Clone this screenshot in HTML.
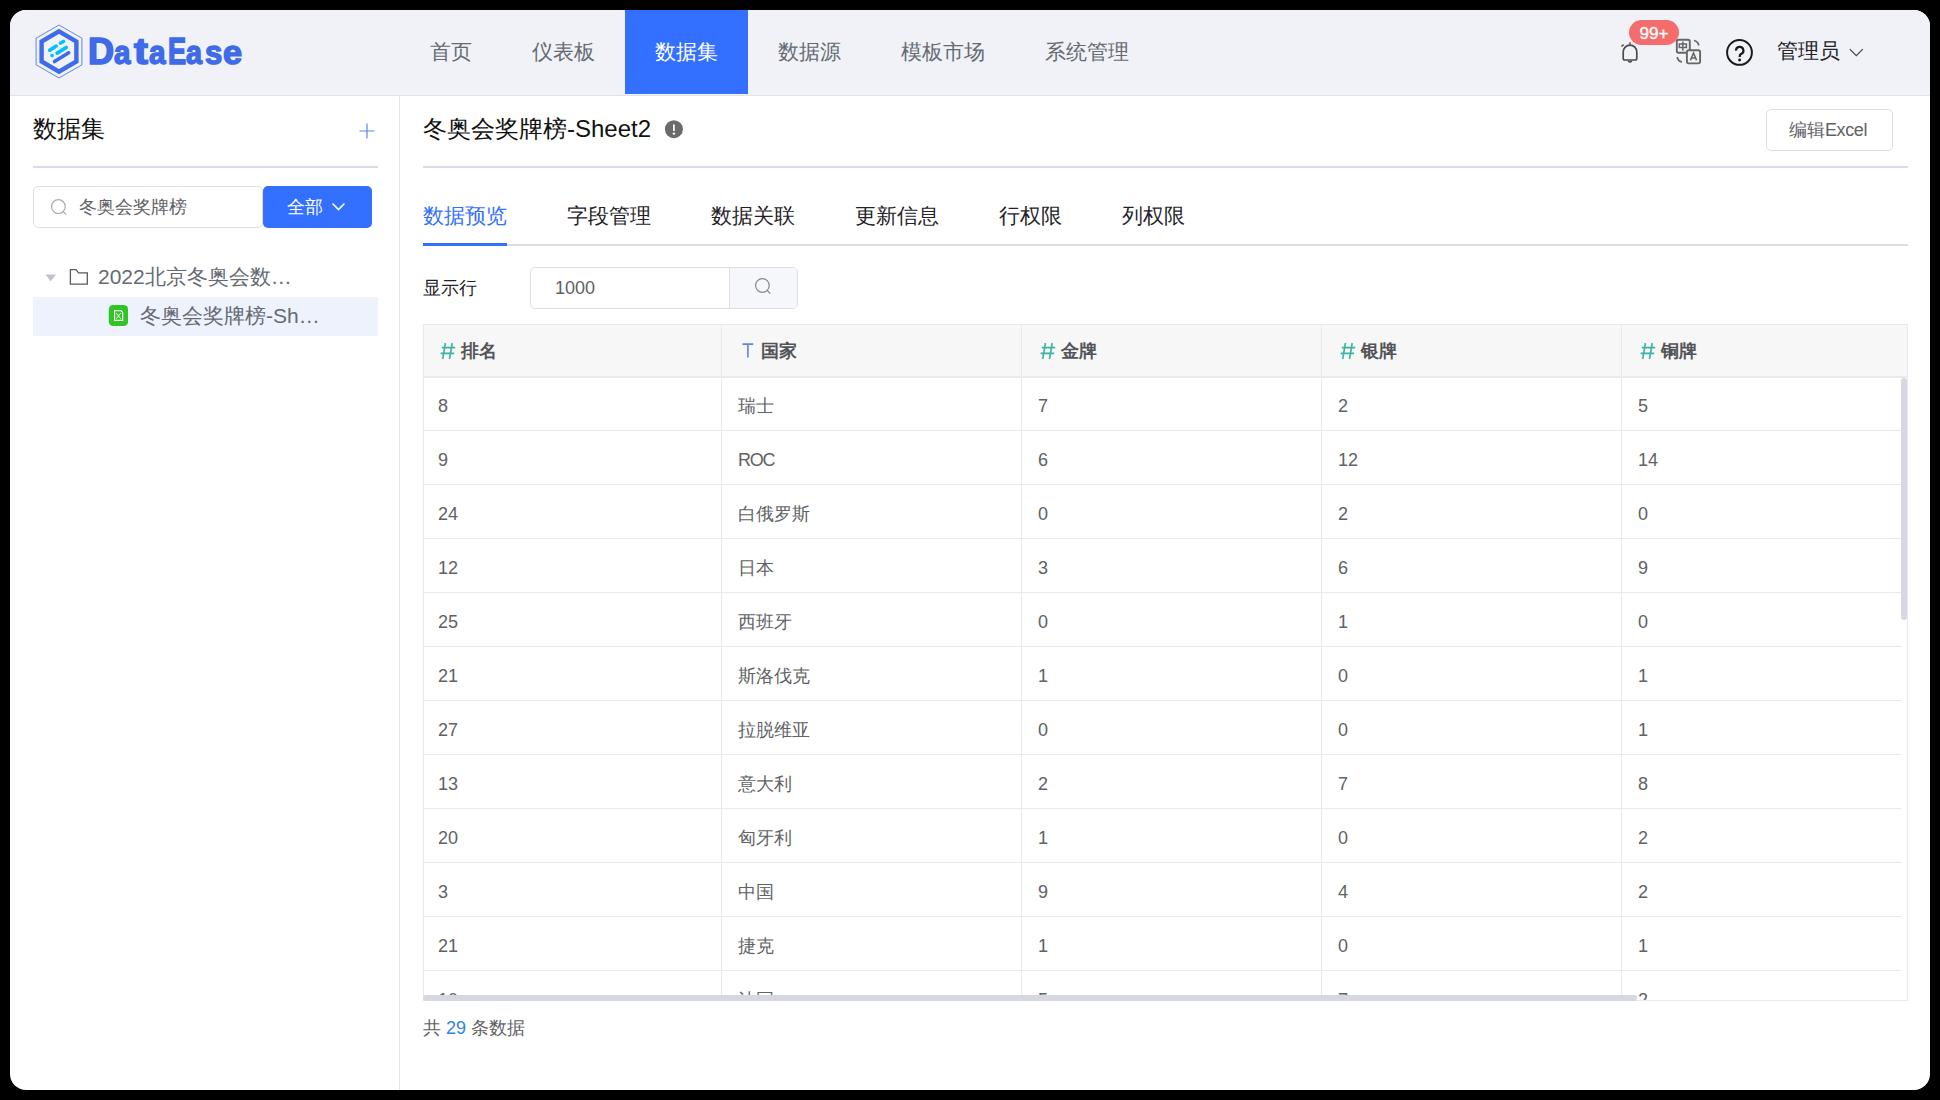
<!DOCTYPE html>
<html><head><meta charset="utf-8">
<style>
*{box-sizing:border-box;margin:0;padding:0}
html,body{width:1940px;height:1100px;background:#000;overflow:hidden;font-family:"Liberation Sans",sans-serif}
.win{position:absolute;left:10px;top:10px;width:1920px;height:1080px;border-radius:16px;background:#fff;overflow:hidden}
.a{position:absolute;white-space:nowrap}
.hdr{position:absolute;left:0;top:0;width:1920px;height:86px;background:#f1f2f7;border-bottom:1px solid #e2e3e6}
.nav{position:absolute;top:0;height:84px;line-height:84px;font-size:21px;color:#646a73;text-align:center}
.nav.on{background:#3370ff;color:#fff}
.side{position:absolute;left:0;top:86px;width:390px;height:994px;border-right:1px solid #e6e6e6}
.t18{font-size:18px;line-height:18px}
.t21{font-size:21px;line-height:21px}
.t24{font-size:24px;line-height:24px}
.tabs{position:absolute;left:413px;top:172px;width:1485px;height:64px;border-bottom:2px solid #dcdcdc}
.tab{position:absolute;top:23px;font-size:21px;line-height:21px;color:#1f2329}
.tbl{position:absolute;left:413px;top:314px;width:1485px;height:677px;border:1px solid #e8e9ec;overflow:hidden}
.th{position:absolute;top:0;height:53px;background:#f7f7f7;border-bottom:2px solid #e8eaed}
.col{position:absolute;top:0;width:1px;background:#e8e9ec}
.row{position:absolute;left:0;height:1px;background:#e8e9ec}
.cell{position:absolute;font-size:18px;line-height:18px;color:#606266}
.hd{position:absolute;top:17px;font-size:17.5px;line-height:18px;font-weight:bold;color:#525457}
.hd i{font-style:normal;font-weight:normal;color:#36b3a4;margin-right:6px}
.hd i.T{color:#3370ff}
</style></head><body>
<div class="win">
  <!-- header -->
  <div class="hdr">
    <svg class="a" style="left:0;top:0" width="80" height="80" viewBox="0 0 80 80">
      <polygon points="49,15 71.9,28.2 71.9,54.8 49,68 26.1,54.8 26.1,28.2" fill="none" stroke="#3f6ae8" stroke-width="0.8"/>
      <polygon points="49,21.4 66.4,31.5 66.4,51.5 49,61.6 31.6,51.5 31.6,31.5" fill="none" stroke="#3f6ae8" stroke-width="4.4"/>
      <g stroke-linecap="round" stroke-width="3.6" fill="none">
        <line x1="39.7" y1="40.2" x2="46.2" y2="36.1" stroke="#00bfff"/>
        <line x1="50.5" y1="33" x2="53.5" y2="31.5" stroke="#00bfff"/>
        <line x1="47.2" y1="43.1" x2="56.2" y2="37.5" stroke="#00bfff"/>
        <line x1="42" y1="45.6" x2="42.1" y2="45.6" stroke="#00bfff"/>
        <line x1="44.5" y1="51.5" x2="58.7" y2="42.8" stroke="#3f6ae8"/>
      </g>
    </svg>
    <div class="a" style="left:0;top:23px;width:260px;height:40px;font-size:37px;line-height:37px;font-weight:bold;color:#3f6ae8;-webkit-text-stroke:1.6px #3f6ae8"><span class="a" style="left:78.05px;top:0;transform:scaleX(0.975);transform-origin:0 0">D</span><span class="a" style="left:104.34px;top:0;transform:scale(0.799,0.9);transform-origin:0 32px">a</span><span class="a" style="left:124.00px;top:0;transform:scaleX(1.130);transform-origin:0 0">t</span><span class="a" style="left:139.34px;top:0;transform:scale(0.804,0.9);transform-origin:0 32px">a</span><span class="a" style="left:157.51px;top:0;transform:scaleX(0.734);transform-origin:0 0">E</span><span class="a" style="left:176.26px;top:0;transform:scale(0.775,0.9);transform-origin:0 32px">a</span><span class="a" style="left:195.00px;top:0;transform:scale(0.842,0.9);transform-origin:0 32px">s</span><span class="a" style="left:212.92px;top:0;transform:scale(0.926,0.9);transform-origin:0 32px">e</span></div>

    <div class="nav" style="left:390px;width:102px">首页</div>
    <div class="nav" style="left:492px;width:123px">仪表板</div>
    <div class="nav on" style="left:615px;width:123px">数据集</div>
    <div class="nav" style="left:738px;width:123px">数据源</div>
    <div class="nav" style="left:861px;width:144px">模板市场</div>
    <div class="nav" style="left:1005px;width:144px">系统管理</div>

    <!-- bell -->
    <svg class="a" style="left:1608px;top:28px" width="24" height="28" viewBox="0 0 24 28">
      <path d="M5.2 20.3 V14 A6.8 6.8 0 0 1 18.8 14 V20.3 Q18.8 22 17.2 22 H6.8 Q5.2 22 5.2 20.3 Z" fill="none" stroke="#4a4a4a" stroke-width="1.7" stroke-linejoin="round"/>
      <path d="M10.2 23 Q12 25.2 13.8 23" fill="none" stroke="#4a4a4a" stroke-width="1.5"/>
      <path d="M12 6.8 V4.2" stroke="#4a4a4a" stroke-width="1.4"/>
      <path d="M3.4 8.5 L5.6 6.6" stroke="#4a4a4a" stroke-width="1.4"/>
    </svg>
    <div class="a" style="left:1619px;top:10px;width:50px;height:25px;border-radius:13px;background:#f56c6c;color:#fff;font-size:17px;line-height:27px;text-align:center;-webkit-text-stroke:0.3px #fff">99+</div>
    <!-- translate -->
    <svg class="a" style="left:1664px;top:26px" width="28" height="30" viewBox="0 0 28 30">
      <rect x="2.8" y="3.7" width="13" height="13" rx="1.8" fill="none" stroke="#666" stroke-width="1.9"/>
      <rect x="12.9" y="14.2" width="13.2" height="13.2" rx="1.8" fill="#f1f2f7" stroke="#666" stroke-width="1.9"/>
      <path d="M5.3 8 H12.4 V11.4 H5.3 Z M8.85 5.6 V14.8" fill="none" stroke="#666" stroke-width="1.5"/>
      <path d="M16.4 24.4 L19.5 17 L22.6 24.4 M17.5 21.9 H21.5" fill="none" stroke="#666" stroke-width="1.5"/>
      <path d="M20 4.5 A6 6 0 0 1 24.8 9.5" fill="none" stroke="#666" stroke-width="1.7"/>
      <path d="M3.2 21 A6 6 0 0 0 8 26" fill="none" stroke="#666" stroke-width="1.7"/>
    </svg>
    <!-- help -->
    <svg class="a" style="left:1714px;top:27px" width="30" height="30" viewBox="0 0 30 30">
      <circle cx="15.5" cy="15.4" r="12.4" fill="none" stroke="#1a1a1a" stroke-width="2"/>
      <path d="M12 13.6 A3.7 3.7 0 1 1 16.9 17 Q15.6 17.8 15.6 20" fill="none" stroke="#1a1a1a" stroke-width="2.2"/>
      <circle cx="15.6" cy="23" r="1.45" fill="#1a1a1a"/>
    </svg>
    <div class="a t21" style="left:1767px;top:30px;color:#1f2329">管理员</div>
    <svg class="a" style="left:1838px;top:38px" width="16" height="10" viewBox="0 0 16 10">
      <path d="M1.8 1.2 L8.3 7.7 L14.8 1.2" fill="none" stroke="#3f3f55" stroke-width="1.15"/>
    </svg>
  </div>

  <!-- sidebar -->
  <div class="side"></div>
  <div class="a t24" style="left:23px;top:107px;color:#111">数据集</div>
  <svg class="a" style="left:348px;top:112px" width="18" height="18" viewBox="0 0 18 18">
    <path d="M9 1.5 V16.5 M1.5 9 H16.5" stroke="#5b82f5" stroke-width="1.2"/>
  </svg>
  <div class="a" style="left:23px;top:156px;width:345px;height:2px;background:#d9dce5"></div>
  <div class="a" style="left:23px;top:176px;width:230px;height:42px;border:1px solid #dcdfe6;border-radius:5px"></div>
  <svg class="a" style="left:40px;top:189px" width="18" height="18" viewBox="0 0 18 18">
    <circle cx="8.4" cy="7.6" r="6.9" fill="none" stroke="#a8abb2" stroke-width="1.2"/>
    <path d="M13.3 12.6 L16 15.4" stroke="#a8abb2" stroke-width="1.2" stroke-linecap="round"/>
  </svg>
  <div class="a t18" style="left:69px;top:188px;color:#606266">冬奥会奖牌榜</div>
  <div class="a" style="left:253px;top:176px;width:109px;height:42px;background:#3370ff;border-radius:5px"></div>
  <div class="a t18" style="left:277px;top:188px;color:#fff">全部</div>
  <svg class="a" style="left:321px;top:191px" width="16" height="12" viewBox="0 0 16 12">
    <path d="M1.5 2.5 L7.5 8.5 L13.5 2.5" fill="none" stroke="#fff" stroke-width="1.6"/>
  </svg>

  <!-- tree -->
  <svg class="a" style="left:34px;top:262px" width="14" height="10" viewBox="0 0 14 10">
    <path d="M1.4 2.6 H12 L6.7 9.6 Z" fill="#bfc3cb"/>
  </svg>
  <svg class="a" style="left:57px;top:256px" width="22" height="20" viewBox="0 0 22 20">
    <path d="M3.4 3.6 H9.1 L11.5 6.9 H20.3 V18.2 H3.4 Z" fill="none" stroke="#575b61" stroke-width="1.3" stroke-linejoin="miter"/>
  </svg>
  <div class="a t21" style="left:88px;top:256px;color:#646a73">2022北京冬奥会数…</div>
  <div class="a" style="left:23px;top:287px;width:345px;height:39px;background:#eef2fd"></div>
  <svg class="a" style="left:98px;top:294px" width="20" height="22" viewBox="0 0 20 22">
    <rect x="0.8" y="1" width="19.3" height="21" rx="4.5" fill="#30c424"/>
    <path d="M6.6 6.6 H13 L14.7 8.4 V16.4 H6.6 Z" fill="none" stroke="#fff" stroke-width="1.1"/>
    <path d="M8.4 9.2 L12.6 14.6 M12.6 9.2 L8.4 14.6" stroke="#fff" stroke-width="1"/>
  </svg>
  <div class="a t21" style="left:130px;top:295px;color:#646a73">冬奥会奖牌榜-Sh…</div>

  <!-- main header -->
  <div class="a t24" style="left:413px;top:107px;color:#111">冬奥会奖牌榜-Sheet2</div>
  <svg class="a" style="left:654px;top:110px" width="20" height="20" viewBox="0 0 20 20">
    <circle cx="9.9" cy="9.2" r="9" fill="#6b6b6b"/>
    <path d="M9.9 4.4 V11" stroke="#fff" stroke-width="1.8" stroke-linecap="butt"/>
    <circle cx="9.9" cy="13.6" r="1.2" fill="#fff"/>
  </svg>
  <div class="a" style="left:1756px;top:99px;width:127px;height:42px;border:1px solid #dcdfe6;border-radius:5px"></div>
  <div class="a t18" style="left:1779px;top:111px;color:#606266">编辑<span style="letter-spacing:-0.4px">Excel</span></div>
  <div class="a" style="left:413px;top:156px;width:1485px;height:2px;background:#d9dce5"></div>

  <!-- tabs -->
  <div class="tabs">
    <div class="tab" style="left:0;color:#3370ff">数据预览</div>
    <div class="tab" style="left:144px">字段管理</div>
    <div class="tab" style="left:288px">数据关联</div>
    <div class="tab" style="left:432px">更新信息</div>
    <div class="tab" style="left:576px">行权限</div>
    <div class="tab" style="left:699px">列权限</div>
    <div class="a" style="left:0;top:61px;width:84px;height:3px;background:#3370ff"></div>
  </div>

  <!-- show rows -->
  <div class="a t18" style="left:413px;top:269px;color:#1f2329">显示行</div>
  <div class="a" style="left:520px;top:257px;width:268px;height:42px;border:1px solid #dcdfe6;border-radius:5px;overflow:hidden">
    <div class="a" style="left:198px;top:0;width:70px;height:40px;background:#f5f7fa;border-left:1px solid #dcdfe6"></div>
  </div>
  <div class="a t18" style="left:545px;top:269px;color:#606266">1000</div>
  <svg class="a" style="left:744px;top:268px" width="18" height="18" viewBox="0 0 18 18">
    <circle cx="8.4" cy="7.5" r="6.8" fill="none" stroke="#85888e" stroke-width="1.2"/>
    <path d="M13.3 12.5 L16 15.3" stroke="#85888e" stroke-width="1.2" stroke-linecap="round"/>
  </svg>

  <!-- table -->
  <div class="tbl">
<div class="th" style="left:0;width:1485px"></div>
<div class="col" style="left:297px;height:677px"></div>
<div class="col" style="left:597px;height:677px"></div>
<div class="col" style="left:897px;height:677px"></div>
<div class="col" style="left:1197px;height:677px"></div>
<svg class="a" style="left:16px;top:17px" width="16" height="18" viewBox="0 0 16 18"><path d="M5.4 1 L2.7 17 M12.2 1 L9.5 17 M1.8 5.6 H15.2 M0.6 11.4 H14.1" stroke="#3bb4a5" stroke-width="1.6" fill="none"/></svg>
<div class="hd" style="left:37px">排名</div>
<svg class="a" style="left:318px;top:17px" width="12" height="16" viewBox="0 0 12 16"><path d="M0.5 2.1 H11.3 M5.9 2.1 V15.6" stroke="#5a86e0" stroke-width="1.6" fill="none"/></svg>
<div class="hd" style="left:337px">国家</div>
<svg class="a" style="left:616px;top:17px" width="16" height="18" viewBox="0 0 16 18"><path d="M5.4 1 L2.7 17 M12.2 1 L9.5 17 M1.8 5.6 H15.2 M0.6 11.4 H14.1" stroke="#3bb4a5" stroke-width="1.6" fill="none"/></svg>
<div class="hd" style="left:637px">金牌</div>
<svg class="a" style="left:916px;top:17px" width="16" height="18" viewBox="0 0 16 18"><path d="M5.4 1 L2.7 17 M12.2 1 L9.5 17 M1.8 5.6 H15.2 M0.6 11.4 H14.1" stroke="#3bb4a5" stroke-width="1.6" fill="none"/></svg>
<div class="hd" style="left:937px">银牌</div>
<svg class="a" style="left:1216px;top:17px" width="16" height="18" viewBox="0 0 16 18"><path d="M5.4 1 L2.7 17 M12.2 1 L9.5 17 M1.8 5.6 H15.2 M0.6 11.4 H14.1" stroke="#3bb4a5" stroke-width="1.6" fill="none"/></svg>
<div class="hd" style="left:1237px">铜牌</div>
<div class="cell" style="left:14px;top:72px">8</div>
<div class="cell" style="left:314px;top:72px">瑞士</div>
<div class="cell" style="left:614px;top:72px">7</div>
<div class="cell" style="left:914px;top:72px">2</div>
<div class="cell" style="left:1214px;top:72px">5</div>
<div class="row" style="top:105px;width:1477px"></div>
<div class="cell" style="left:14px;top:126px">9</div>
<div class="cell" style="left:314px;top:126px"><span style="letter-spacing:-1.3px">ROC</span></div>
<div class="cell" style="left:614px;top:126px">6</div>
<div class="cell" style="left:914px;top:126px">12</div>
<div class="cell" style="left:1214px;top:126px">14</div>
<div class="row" style="top:159px;width:1477px"></div>
<div class="cell" style="left:14px;top:180px">24</div>
<div class="cell" style="left:314px;top:180px">白俄罗斯</div>
<div class="cell" style="left:614px;top:180px">0</div>
<div class="cell" style="left:914px;top:180px">2</div>
<div class="cell" style="left:1214px;top:180px">0</div>
<div class="row" style="top:213px;width:1477px"></div>
<div class="cell" style="left:14px;top:234px">12</div>
<div class="cell" style="left:314px;top:234px">日本</div>
<div class="cell" style="left:614px;top:234px">3</div>
<div class="cell" style="left:914px;top:234px">6</div>
<div class="cell" style="left:1214px;top:234px">9</div>
<div class="row" style="top:267px;width:1477px"></div>
<div class="cell" style="left:14px;top:288px">25</div>
<div class="cell" style="left:314px;top:288px">西班牙</div>
<div class="cell" style="left:614px;top:288px">0</div>
<div class="cell" style="left:914px;top:288px">1</div>
<div class="cell" style="left:1214px;top:288px">0</div>
<div class="row" style="top:321px;width:1477px"></div>
<div class="cell" style="left:14px;top:342px">21</div>
<div class="cell" style="left:314px;top:342px">斯洛伐克</div>
<div class="cell" style="left:614px;top:342px">1</div>
<div class="cell" style="left:914px;top:342px">0</div>
<div class="cell" style="left:1214px;top:342px">1</div>
<div class="row" style="top:375px;width:1477px"></div>
<div class="cell" style="left:14px;top:396px">27</div>
<div class="cell" style="left:314px;top:396px">拉脱维亚</div>
<div class="cell" style="left:614px;top:396px">0</div>
<div class="cell" style="left:914px;top:396px">0</div>
<div class="cell" style="left:1214px;top:396px">1</div>
<div class="row" style="top:429px;width:1477px"></div>
<div class="cell" style="left:14px;top:450px">13</div>
<div class="cell" style="left:314px;top:450px">意大利</div>
<div class="cell" style="left:614px;top:450px">2</div>
<div class="cell" style="left:914px;top:450px">7</div>
<div class="cell" style="left:1214px;top:450px">8</div>
<div class="row" style="top:483px;width:1477px"></div>
<div class="cell" style="left:14px;top:504px">20</div>
<div class="cell" style="left:314px;top:504px">匈牙利</div>
<div class="cell" style="left:614px;top:504px">1</div>
<div class="cell" style="left:914px;top:504px">0</div>
<div class="cell" style="left:1214px;top:504px">2</div>
<div class="row" style="top:537px;width:1477px"></div>
<div class="cell" style="left:14px;top:558px">3</div>
<div class="cell" style="left:314px;top:558px">中国</div>
<div class="cell" style="left:614px;top:558px">9</div>
<div class="cell" style="left:914px;top:558px">4</div>
<div class="cell" style="left:1214px;top:558px">2</div>
<div class="row" style="top:591px;width:1477px"></div>
<div class="cell" style="left:14px;top:612px">21</div>
<div class="cell" style="left:314px;top:612px">捷克</div>
<div class="cell" style="left:614px;top:612px">1</div>
<div class="cell" style="left:914px;top:612px">0</div>
<div class="cell" style="left:1214px;top:612px">1</div>
<div class="row" style="top:645px;width:1477px"></div>
<div class="cell" style="left:14px;top:666px">10</div>
<div class="cell" style="left:314px;top:666px">法国</div>
<div class="cell" style="left:614px;top:666px">5</div>
<div class="cell" style="left:914px;top:666px">7</div>
<div class="cell" style="left:1214px;top:666px">2</div>
<div class="row" style="top:645px;width:1477px"></div>
<div class="a" style="left:1477px;top:53px;width:6px;height:242px;border-radius:3px;background:#d6d8e1"></div>
  </div>
  <div class="a" style="left:413px;top:985px;width:1214px;height:6px;border-radius:3px;background:#d6d8e1"></div>

  <div class="a t18" style="left:413px;top:1009px;color:#606266">共 <span style="color:#2b85e4">29</span> 条数据</div>
</div>

</body></html>
